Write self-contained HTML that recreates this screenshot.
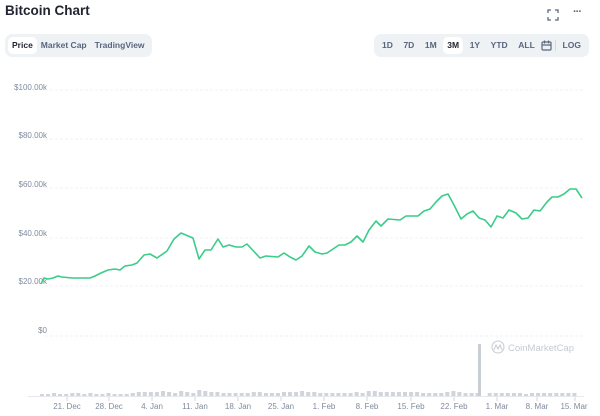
<!DOCTYPE html>
<html><head><meta charset="utf-8"><style>
*{margin:0;padding:0;box-sizing:border-box}
body{width:600px;height:416px;background:#fff;font-family:"Liberation Sans",sans-serif;position:relative;overflow:hidden;color:#222531}
.t{position:absolute;left:5px;top:3px;font-size:13.5px;font-weight:bold;color:#222531}
.grp{position:absolute;background:#eff2f5;border-radius:7px;height:23px;top:34px;display:flex;align-items:center;padding:0 3px;font-size:8.5px;font-weight:bold;color:#58667e}
.grp span{padding:0 4px;height:17px;line-height:17px;border-radius:5px}
.grp .a{background:#fff;color:#222531}
.yl{position:absolute;font-size:8px;color:#808a9d;right:553px;text-align:right}
.xl{position:absolute;top:402px;font-size:8px;color:#808a9d;transform:translateX(-50%);white-space:nowrap}
</style></head><body>
<div class="t">Bitcoin Chart</div>
<svg style="position:absolute;left:547px;top:9px" width="12" height="12" viewBox="0 0 12 12" fill="none" stroke="#58667e" stroke-width="1.3"><path d="M1 4V1h3M8 1h3v3M11 8v3H8M4 11H1V8"/></svg>
<div style="position:absolute;left:573px;top:6px;font-size:11px;color:#58667e;letter-spacing:-1px;font-weight:bold">···</div>
<div class="grp" style="left:5px"><span class="a">Price</span><span>Market Cap</span><span>TradingView</span></div>
<div class="grp" style="left:374px;width:215px;justify-content:space-between;padding:0 4px"><span>1D</span><span>7D</span><span>1M</span><span class="a">3M</span><span>1Y</span><span>YTD</span><span>ALL</span>
<svg width="11" height="11" viewBox="0 0 11 11" fill="none" stroke="#58667e" stroke-width="1.2"><rect x="1" y="2" width="9" height="8" rx="1"/><path d="M1 5h9M3.5 0.5v3M7.5 0.5v3"/></svg><span style="border-left:1px solid #d5d9e0;height:11px;padding:0"></span><span>LOG</span></div>
<div class="yl" style="top:83px">$100.00k</div>
<div class="yl" style="top:131px">$80.00k</div>
<div class="yl" style="top:180px">$60.00k</div>
<div class="yl" style="top:229px">$40.00k</div>
<div class="yl" style="top:277px">$20.00k</div>
<div class="yl" style="top:326px">$0</div>
<svg style="position:absolute;left:0;top:0" width="600" height="416">
<g stroke="#f1f2f4" stroke-width="1" stroke-dasharray="3 2">
<line x1="45" y1="90" x2="584" y2="90"/><line x1="45" y1="139" x2="584" y2="139"/><line x1="45" y1="188" x2="584" y2="188"/><line x1="45" y1="238" x2="584" y2="238"/><line x1="45" y1="286" x2="584" y2="286"/><line x1="45" y1="336" x2="584" y2="336"/></g>
<polyline fill="none" stroke="#3bcc8a" stroke-width="1.6" stroke-linejoin="round" points="41,284 44,278 48,279 53,278 58,276 62,277 72,278 78,278 85,278 90,278 95,276 101,273 108,270 115,269 120,270 125,266 132,265 137,263 144,255 150,254 157,258 167,251 174,239 181,233 193,238 199,259 205,250 211,250 218,239 223,247 229,245 236,247 242,247 247,244 260,258 266,256 278,257 284,253 290,257 296,260 302,256 309,246 315,252 322,254 327,253 333,249 339,245 345,245 351,242 357,236 363,242 369,230 376,221 381,226 388,219 400,220 406,216 418,216 424,211 430,209 436,202 442,196 448,194 454,205 461,219 467,214 473,211 479,218 485,220 491,227 497,216 503,218 509,210 516,213 522,219 528,218 534,210 540,211 547,202 552,197 558,197 564,194 570,189 576,189 582,198"/>
<line x1="28" y1="396.5" x2="584" y2="396.5" stroke="#e6e8ec"/>
<g fill="#d0d4db" id="v"></g>
<rect x="478" y="344" width="3" height="52" fill="#c9cdd4"/>
<g stroke="#d0d4db"><line x1="67" y1="397" x2="67" y2="401"/><line x1="109" y1="397" x2="109" y2="401"/><line x1="152" y1="397" x2="152" y2="401"/><line x1="195" y1="397" x2="195" y2="401"/><line x1="238" y1="397" x2="238" y2="401"/><line x1="281" y1="397" x2="281" y2="401"/><line x1="324" y1="397" x2="324" y2="401"/><line x1="367" y1="397" x2="367" y2="401"/><line x1="411" y1="397" x2="411" y2="401"/><line x1="454" y1="397" x2="454" y2="401"/><line x1="497" y1="397" x2="497" y2="401"/><line x1="537" y1="397" x2="537" y2="401"/><line x1="575" y1="397" x2="575" y2="401"/></g>
<circle cx="498" cy="347" r="6" fill="none" stroke="#c6cad2" stroke-width="1"/>
<path d="M494 350l2-5 2 4 2-4 2 5" fill="none" stroke="#c6cad2" stroke-width="1"/>
<text x="508" y="351" font-size="9.5" fill="#c6cad2" font-family="Liberation Sans">CoinMarketCap</text>
</svg>
<div class="xl" style="left:67px">21. Dec</div><div class="xl" style="left:109px">28. Dec</div><div class="xl" style="left:152px">4. Jan</div><div class="xl" style="left:195px">11. Jan</div><div class="xl" style="left:238px">18. Jan</div><div class="xl" style="left:281px">25. Jan</div><div class="xl" style="left:324px">1. Feb</div><div class="xl" style="left:367px">8. Feb</div><div class="xl" style="left:411px">15. Feb</div><div class="xl" style="left:454px">22. Feb</div><div class="xl" style="left:497px">1. Mar</div><div class="xl" style="left:537px">8. Mar</div><div class="xl" style="left:574px">15. Mar</div>
<script>
var g=document.getElementById('v'),s='';
var h=[2,2,3,2,2,3,3,2,3,2,2,3,2,2,2,3,4,4,4,4,5,4,3,5,4,3,6,5,4,4,3,3,3,3,3,4,4,3,3,3,4,4,4,5,4,4,3,3,3,3,3,3,4,3,5,5,4,4,4,4,4,4,4,3,3,3,3,4,5,4,3,3,3,3,3,3,3,3,3,3,2,3,3,3,3,3,3,3,3];
for(var i=0;i<h.length;i++){var x=40+i*6.05;if(Math.abs(x-479)<3)continue;s+='<rect x="'+x.toFixed(1)+'" y="'+(396-h[i])+'" width="4" height="'+h[i]+'"/>';}
g.innerHTML=s;
</script>
</body></html>
